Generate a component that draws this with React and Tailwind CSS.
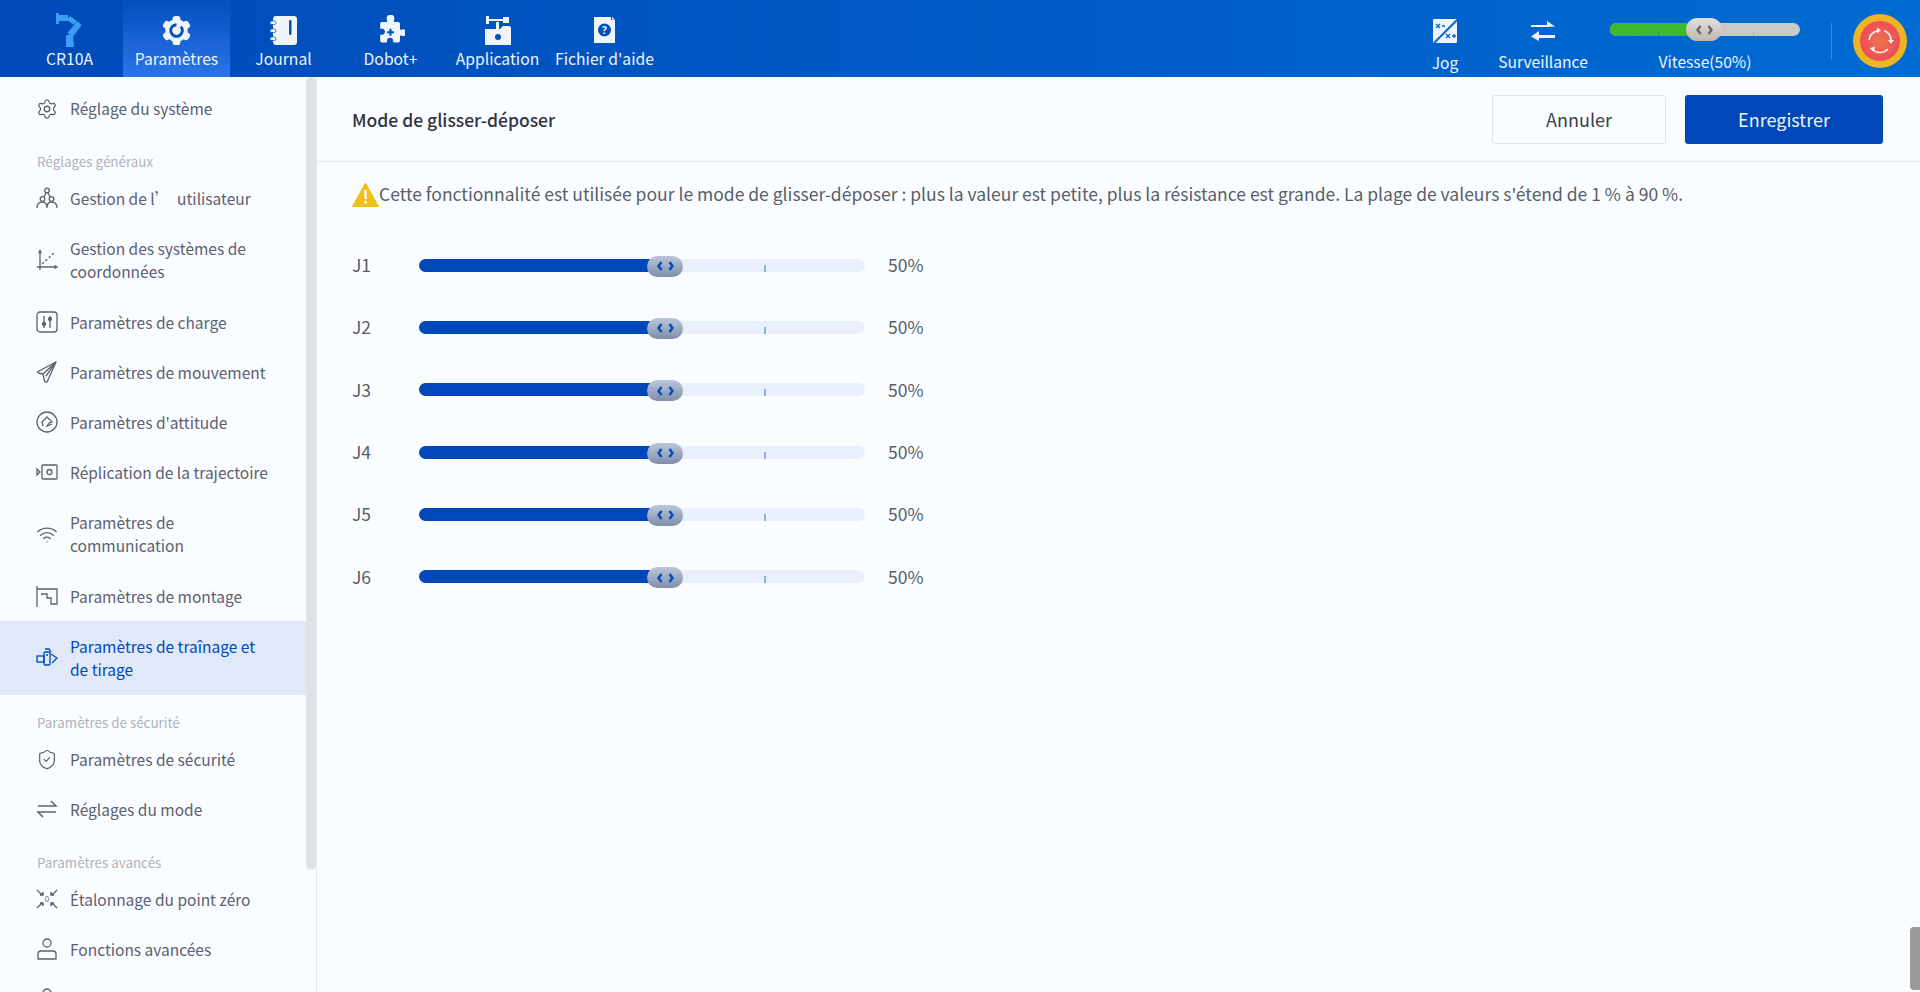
import { Settings, Wifi, ShieldCheck } from 'lucide-react';

const font = 'font-["Noto_Sans_CJK_SC","Noto_Sans",sans-serif]';

function RobotIcon() {
  return (
    <svg width="27" height="34" viewBox="0 0 27 34" fill="none">
      <rect x="0" y="0" width="3" height="11" fill="#3c9df2" />
      <path d="M3 2h9v6H3z" fill="#3c9df2" />
      <path d="M14 3l10 7-3 4-10-7z" fill="#3c9df2" />
      <path d="M26 12l-9 12-6-4 10-12z" fill="#3c9df2" stroke="#004fbd" strokeWidth="0.6" />
      <path d="M10 22h7l1 12h-8z" fill="#3c9df2" />
    </svg>
  );
}

function GearIcon() {
  return (
    <svg width="31" height="31" viewBox="0 0 32 32">
      <g fill="#f0f4fb">
        <circle cx="16" cy="16" r="11.500" />
        <rect x="12" y="1" width="8" height="30" rx="3" />
        <rect x="12" y="1" width="8" height="30" rx="3" transform="rotate(60 16 16)" />
        <rect x="12" y="1" width="8" height="30" rx="3" transform="rotate(120 16 16)" />
      </g>
      <path d="M20.500 12a6 6 0 1 1-4.500-2" fill="none" stroke="#0050bd" strokeWidth="3" />
    </svg>
  );
}

function JournalIcon() {
  return (
    <svg width="27" height="29" viewBox="0 0 27 29">
      <rect x="3" y="0" width="24" height="29" rx="3" fill="#f0f4fb" />
      <rect x="0" y="5" width="6" height="3.500" rx="1.700" fill="#f0f4fb" stroke="#0050bd" strokeWidth="0.7" />
      <rect x="0" y="13" width="6" height="3.500" rx="1.700" fill="#f0f4fb" stroke="#0050bd" strokeWidth="0.7" />
      <rect x="0" y="21" width="6" height="3.500" rx="1.700" fill="#f0f4fb" stroke="#0050bd" strokeWidth="0.7" />
      <rect x="19" y="4" width="2.500" height="15" rx="1.200" fill="#0050bd" />
    </svg>
  );
}

function PuzzleIcon() {
  return (
    <svg width="29" height="31" viewBox="0 0 32 36">
      <path
        d="M12 6a4.500 4.500 0 1 1 8 0c0 1 0 2 1 2h4a2 2 0 0 1 2 2v6c0 1 1 1.500 2 1a4 4 0 1 1 0 7c-1-.5-2 0-2 1v5a2 2 0 0 1-2 2h-5c-1 0-1-1-1-2a3.500 3.500 0 1 0-7 0c0 1 0 2-1 2H6a2 2 0 0 1-2-2v-6c0-1 1-1 2-1a3.500 3.500 0 1 0 0-7c-1 0-2 0-2-1v-5a2 2 0 0 1 2-2h5c1 0 1-1 1-2z"
        fill="#f0f4fb"
      />
      <path d="M12 20h8M16 16v8" stroke="#0050bd" strokeWidth="2.400" />
    </svg>
  );
}

function AppIcon() {
  return (
    <svg width="26" height="29" viewBox="0 0 26 29">
      <path d="M1 0h3v3h14V1h6v6h-6V5H4v3H1z" fill="#f0f4fb" />
      <rect x="11" y="6" width="3" height="7" fill="#f0f4fb" />
      <path d="M0 13h15l3-3h6a2 2 0 0 1 2 2v17H0z" fill="#f0f4fb" />
      <circle cx="13" cy="21" r="3" fill="#0050bd" />
    </svg>
  );
}

function HelpIcon() {
  return (
    <svg width="21" height="26" viewBox="0 0 21 26">
      <path d="M0 0h17v3h4v23H0z" fill="#f0f4fb" />
      <path d="M18 0l3 2.500h-3z" fill="#f0f4fb" />
      <circle cx="10.500" cy="13" r="6.500" fill="#0050bd" />
      <text x="10.500" y="17" textAnchor="middle" fontSize="10" fontWeight="700" fill="#f0f4fb" fontFamily="Noto Sans">?</text>
    </svg>
  );
}

function JogIcon() {
  return (
    <svg width="24" height="24" viewBox="0 0 24 24">
      <rect width="24" height="24" rx="1" fill="#f0f4fb" />
      <path d="M24 1L1 24" stroke="#0069d0" strokeWidth="2" />
      <path d="M3 5l4 4M7 5l-4 4M9 7h3M13 15l4 4M17 15l-4 4M19 17h4M21 15v4" stroke="#0069d0" strokeWidth="1.300" fill="none" />
    </svg>
  );
}

function SwapIcon() {
  return (
    <svg width="26" height="22" viewBox="0 0 26 22" fill="#f0f4fb">
      <path d="M1 5h16V1l8 5.500-8 0.500v0H1z" />
      <path d="M25 15H9v-4l-8 5.500L9 21v-3h16z" />
    </svg>
  );
}

function StopButton() {
  return (
    <div className="w-[54px] h-[54px] rounded-full bg-[#ecb521] flex items-center justify-center">
      <div className="w-[40px] h-[40px] rounded-full bg-[radial-gradient(circle,#ea7450_0%,#ee4a58_75%)] flex items-center justify-center">
        <svg width="30" height="30" viewBox="0 0 30 30" fill="none" stroke="#f3f3f3" strokeWidth="1.600">
          <path d="M4 14a11 11 0 0 1 8-9" />
          <path d="M19 4.500a11 11 0 0 1 7 10" />
          <path d="M23 23a11 11 0 0 1-15 1" />
          <path d="M12 1.500l4 3-4 3z" fill="#f3f3f3" stroke="none" />
          <path d="M23 14l3 4 3-4z" fill="#f3f3f3" stroke="none" />
          <path d="M10 20.500l-5 1.500 3.500 4z" fill="#f3f3f3" stroke="none" />
        </svg>
      </div>
    </div>
  );
}

const navItems = [
  { label: 'CR10A', icon: <RobotIcon /> },
  { label: 'Paramètres', icon: <GearIcon />, active: true },
  { label: 'Journal', icon: <JournalIcon /> },
  { label: 'Dobot+', icon: <PuzzleIcon /> },
  { label: 'Application', icon: <AppIcon /> },
  { label: "Fichier d'aide", icon: <HelpIcon /> },
];

function Header() {
  return (
    <div className="h-[77px] shrink-0 flex bg-gradient-to-r from-[#004ab9] to-[#006bd2] text-[#eef4fc] pl-4">
      {navItems.map((item) => (
        <div
          key={item.label}
          className={`w-[107px] h-[77px] flex flex-col items-center ${item.active ? 'bg-gradient-to-b from-[#0050bd] to-[#2a74ec]' : ''}`}
        >
          <div className="h-[48px] flex items-center justify-center pt-[12px]">{item.icon}</div>
          <div className="text-[15.700px] leading-[22px] whitespace-nowrap">{item.label}</div>
        </div>
      ))}

      <div className="ml-auto flex items-start">
        <div className="w-[60px] mr-[18px] flex flex-col items-center pt-[19px]">
          <JogIcon />
          <div className="text-[15.600px] leading-[22px] mt-2">Jog</div>
        </div>
        <div className="w-[100px] mr-[17px] flex flex-col items-center pt-[20px]">
          <SwapIcon />
          <div className="text-[15.600px] leading-[22px] mt-[8px]">Surveillance</div>
        </div>
        <div className="w-[190px] mr-[31px] pt-[23px]">
          <div className="relative h-[13px] rounded-full bg-[#c9c9c9]">
            <div className="h-[13px] w-[80px] rounded-l-full bg-[#3fb82e]" />
            <div className="absolute left-[48px] top-[8px] w-px h-[5px] bg-[#2f8f3a]" />
            <div className="absolute left-[143px] top-[8px] w-px h-[5px] bg-[#a9a9a9]" />
            <div className="absolute left-[76px] top-[-5px] w-[36px] h-[23px] rounded-full bg-gradient-to-b from-[#e4e0dc] to-[#bdb8b2] flex items-center justify-center gap-[5px] text-[#6b6b6b]">
              <Chevrons color="#666666" />
            </div>
          </div>
          <div className="text-[15.600px] leading-[22px] text-center mt-[14px]">Vitesse(50%)</div>
        </div>
        <div className="w-px h-[36px] mt-[23px] bg-[#3d8bdb] mr-[21px]" />
        <div className="pt-[14px] pr-[13px]">
          <StopButton />
        </div>
      </div>
    </div>
  );
}

function Chevrons({ color }) {
  return (
    <svg width="17" height="10" viewBox="0 0 17 10" fill="none" stroke={color} strokeWidth="2.300">
      <path d="M4.500 1L1.500 5 4.500 9" />
      <path d="M12.500 1l3 4-3 4" />
    </svg>
  );
}

const ic = { width: 22, height: 22, viewBox: '0 0 22 22', fill: 'none', stroke: 'currentColor', strokeWidth: 1.3 };

const UsersIcon = () => (
  <svg {...ic}>
    <circle cx="11" cy="3.500" r="2.300" />
    <circle cx="6.500" cy="12" r="2.300" />
    <circle cx="15.500" cy="12" r="2.300" />
    <path d="M1 21c0-4 2.500-6 5.500-6s4.500 2 4.500 6M11 21c0-4 1.500-6 4.500-6s5.500 2 5.500 6M8 10l2-4M14 10l-2-4" />
  </svg>
);
const AxesIcon = () => (
  <svg {...ic}>
    <path d="M4 1v20M1 18h20M2.500 4L4 1.500 5.500 4M18.500 16.500L21 18l-2.500 1.500" />
    <path d="M6 15L19 3" strokeDasharray="2.500 2" />
  </svg>
);
const ChargeIcon = () => (
  <svg {...ic}>
    <rect x="1" y="1" width="20" height="20" rx="3" />
    <path d="M8 5v12M14 5v12" />
    <circle cx="8" cy="13" r="1.500" fill="currentColor" />
    <circle cx="14" cy="8" r="1.500" fill="currentColor" />
  </svg>
);
const MotionIcon = () => (
  <svg {...ic}>
    <path d="M20 1L2 10.500c-.8.500-.5 1.500.3 1.500L7 13l1.500 7c.3 1.500 2.500 1.500 3 0z" strokeLinejoin="round" />
    <path d="M7 13L20 1M10 15L20 1" />
  </svg>
);
const AttitudeIcon = () => (
  <svg {...ic}>
    <circle cx="11" cy="11" r="10" />
    <path d="M7 15l-1-4 5-5 5 5-3 1-2 3 5-2" />
  </svg>
);
const ReplayIcon = () => (
  <svg {...ic}>
    <rect x="6" y="4" width="15" height="14" rx="1" />
    <circle cx="13.500" cy="11" r="2.500" />
    <path d="M1 8v6l3-3z" />
  </svg>
);
const MountIcon = () => (
  <svg {...ic}>
    <path d="M1 1v21M1 4h20v15h-6v-6h-4V9H5" />
  </svg>
);
const DragIcon = () => (
  <svg {...ic}>
    <rect x="1" y="9" width="7" height="6" />
    <rect x="8" y="5" width="6" height="13" rx="1" />
    <path d="M9 2h4l2 3M15 7l6 4-5 5M10 8h2" />
  </svg>
);
const ModeIcon = () => (
  <svg {...ic} strokeWidth="1.500">
    <path d="M2 8h18L15 3M20 14H2l5 5" />
  </svg>
);
const ZeroIcon = () => (
  <svg {...ic}>
    <path d="M1 2l5 5M1 20l5-5M21 2l-5 5M21 20l-5-5" />
    <path d="M4 7h3V4M4 15h3v3M18 7h-3V4M18 15h-3v3" fill="currentColor" />
    <text x="11" y="14" textAnchor="middle" fontSize="8" fill="currentColor" stroke="none">0</text>
  </svg>
);
const UserIcon = () => (
  <svg {...ic}>
    <circle cx="11" cy="5" r="4" />
    <path d="M2 21v-5a3 3 0 0 1 3-3h12a3 3 0 0 1 3 3v5z" />
  </svg>
);

const sideItems = [
  { type: 'item', label: 'Réglage du système', icon: <Settings size={24} strokeWidth={1.4} />, h: 'h-[63px]' },
  { type: 'label', label: 'Réglages généraux', h: 'h-[33px]' },
  { type: 'item', label: "Gestion de l’\u00a0\u00a0utilisateur", icon: <UsersIcon /> },
  { type: 'item', label: 'Gestion des systèmes de coordonnées', icon: <AxesIcon />, h: 'h-[74px]' },
  { type: 'item', label: 'Paramètres de charge', icon: <ChargeIcon /> },
  { type: 'item', label: 'Paramètres de mouvement', icon: <MotionIcon /> },
  { type: 'item', label: "Paramètres d'attitude", icon: <AttitudeIcon /> },
  { type: 'item', label: 'Réplication de la trajectoire', icon: <ReplayIcon /> },
  { type: 'item', label: 'Paramètres de communication', icon: <Wifi size={25} strokeWidth={1.4} />, h: 'h-[74px]' },
  { type: 'item', label: 'Paramètres de montage', icon: <MountIcon /> },
  { type: 'item', label: 'Paramètres de traînage et de tirage', icon: <DragIcon />, h: 'h-[74px]', active: true },
  { type: 'label', label: 'Paramètres de sécurité', h: 'h-[39px]' },
  { type: 'item', label: 'Paramètres de sécurité', icon: <ShieldCheck size={25} strokeWidth={1.3} /> },
  { type: 'item', label: 'Réglages du mode', icon: <ModeIcon /> },
  { type: 'label', label: 'Paramètres avancés', h: 'h-[40px]' },
  { type: 'item', label: 'Étalonnage du point zéro', icon: <ZeroIcon /> },
  { type: 'item', label: 'Fonctions avancées', icon: <UserIcon /> },
  { type: 'item', label: '', icon: <UserIcon /> },
];

function Sidebar() {
  return (
    <div className="relative w-[317px] shrink-0 border-r border-[#e4e7ec] overflow-hidden">
      <div className="w-[306px]">
        {sideItems.map((item, i) =>
          item.type === 'label' ? (
            <div
              key={i}
              className={`${item.h} flex items-end pl-[37px] pb-[2px] text-[13.400px] leading-[20px] text-[#aeb3bd]`}
            >
              {item.label}
            </div>
          ) : (
            <div
              key={i}
              className={`${item.h || 'h-[50px]'} flex items-center pl-[36px] gap-[12px] text-[15.500px] leading-[23px] ${
                item.active ? 'bg-[#e1e9f8] text-[#0048b8]' : 'text-[#5c6070]'
              }`}
            >
              <span className="w-[22px] shrink-0 flex justify-center">{item.icon}</span>
              <span className="w-[205px]">{item.label}</span>
            </div>
          )
        )}
      </div>
      <div className="absolute left-[306px] top-0 w-[10px] h-[793px] rounded-full bg-[#dfe2e6]" />
    </div>
  );
}

function JointRow({ name }) {
  return (
    <div className="h-[62.300px] flex items-center text-[#595d68] text-[17.500px]">
      <div className="w-[67px]">{name}</div>
      <div className="relative w-[446px] h-[13px] rounded-full bg-[#eaf0fb]">
        <div className="w-[235px] h-[13px] rounded-l-full bg-[#0048b9]" />
        <div className="absolute left-[345px] top-[6px] w-[2px] h-[7px] bg-[#8fb0e6]" />
        <div className="absolute left-[228px] top-[-3px] w-[36px] h-[21px] rounded-full bg-gradient-to-b from-[#bcc7da] to-[#7f8ea9] flex items-center justify-center">
          <Chevrons color="#0048b9" />
        </div>
      </div>
      <div className="ml-[23px]">50%</div>
    </div>
  );
}

function Content() {
  return (
    <div className="flex-1 min-w-0">
      <div className="h-[85px] border-b border-[#e4e7ec] flex items-center pl-[35px] pr-[37px]">
        <div className="text-[17.500px] font-medium text-[#2f3340] pt-[2px]">Mode de glisser-déposer</div>
        <div className="ml-auto flex gap-[19px] pt-[1px]">
          <button className="w-[174px] h-[49px] rounded-[3px] border border-[#dfe3ea] bg-[#fafdff] text-[18px] text-[#3a3d48]">
            Annuler
          </button>
          <button className="w-[198px] h-[49px] rounded-[3px] bg-[#0048b9] text-[18px] text-[#eef4fc]">
            Enregistrer
          </button>
        </div>
      </div>
      <div className="pl-[35px] pt-[18px]">
        <div className="flex items-center h-[28px] text-[17.500px] text-[#595d68] whitespace-nowrap">
          <svg width="27" height="25" viewBox="0 0 27 25" className="shrink-0">
            <path d="M13.500 1L26.500 24.500H.5z" fill="#f0bf1c" stroke="#f0bf1c" strokeLinejoin="round" />
            <path d="M13.500 8v9M13.500 19v2.500" stroke="#fff" strokeWidth="2.400" />
          </svg>
          Cette fonctionnalité est utilisée pour le mode de glisser-déposer : plus la valeur est petite, plus la résistance est grande. La plage de valeurs s'étend de 1 % à 90 %.
        </div>
        <div className="mt-[26px]">
          {['J1', 'J2', 'J3', 'J4', 'J5', 'J6'].map((j) => (
            <JointRow key={j} name={j} />
          ))}
        </div>
      </div>
    </div>
  );
}

export default function App() {
  return (
    <div className={`${font} relative w-[1920px] h-[992px] overflow-hidden flex flex-col bg-[#fafdff]`}>
      <Header />
      <div className="flex-1 min-h-0 flex">
        <Sidebar />
        <Content />
      </div>
      <div className="absolute right-0 top-[927px] w-[10px] h-[63px] rounded-l-[4px] bg-[#9a9a9a]" />
    </div>
  );
}
